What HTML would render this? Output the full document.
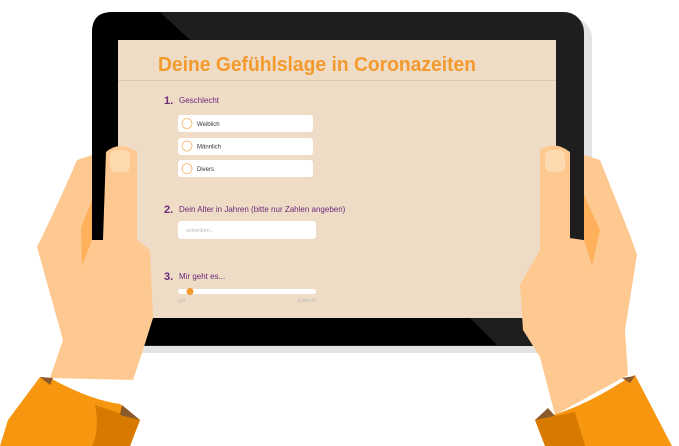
<!DOCTYPE html>
<html><head><meta charset="utf-8"><style>
html,body{margin:0;padding:0;background:#fff;width:679px;height:446px;overflow:hidden}
svg{display:block}
text{font-family:"Liberation Sans",sans-serif}
</style></head><body>
<svg width="679" height="446" viewBox="0 0 679 446" xmlns="http://www.w3.org/2000/svg">
<rect x="98" y="18" width="494" height="335" rx="20" fill="#e3e3e3"/>
<rect x="92" y="12" width="492" height="334" rx="20" fill="#1e1e1e"/>
<path d="M112 12 L160 12 L190 40 L118 40 L118 318 L92 318 L92 32 Q92 12 112 12 Z" fill="#000"/>
<path d="M118 318 L470 318 L497 345 L112 345 Q92 345 92 325 L92 318 Z" fill="#000"/>
<rect x="118" y="40" width="438" height="278" fill="#efdcc6"/>
<line x1="118" y1="80.5" x2="556" y2="80.5" stroke="#dfc6aa" stroke-width="1"/>
<text x="158" y="71" font-size="20" font-weight="bold" fill="#f39a2e" textLength="318" lengthAdjust="spacingAndGlyphs">Deine Gefühlslage in Coronazeiten</text>

<text x="164" y="104" font-size="11" font-weight="bold" fill="#6b2a7a">1.</text>
<text x="179" y="103" font-size="8" fill="#6b2a7a">Geschlecht</text>
<g font-size="6" fill="#333">
<rect x="178" y="115" width="135" height="17" rx="3" fill="#fff"/>
<circle cx="187" cy="123.5" r="5" fill="none" stroke="#f7b466" stroke-width="0.8"/>
<text x="197" y="126">Weiblich</text>
<rect x="178" y="138" width="135" height="17" rx="3" fill="#fff"/>
<circle cx="187" cy="146" r="5" fill="none" stroke="#f7b466" stroke-width="0.8"/>
<text x="197" y="148.5">Männlich</text>
<rect x="178" y="160" width="135" height="17" rx="3" fill="#fff"/>
<circle cx="187" cy="168.5" r="5" fill="none" stroke="#f7b466" stroke-width="0.8"/>
<text x="197" y="171">Divers</text>
</g>

<text x="164" y="213" font-size="11" font-weight="bold" fill="#6b2a7a">2.</text>
<text x="179" y="212" font-size="8" fill="#6b2a7a">Dein Alter in Jahren (bitte nur Zahlen angeben)</text>
<rect x="178" y="221" width="138" height="18" rx="3" fill="#fff"/>
<text x="186" y="232" font-size="5.5" fill="#bbb">schreiben...</text>

<text x="164" y="280" font-size="11" font-weight="bold" fill="#6b2a7a">3.</text>
<text x="179" y="279" font-size="8" fill="#6b2a7a">Mir geht es...</text>
<rect x="178" y="289" width="138" height="5" rx="2.5" fill="#fff"/>
<circle cx="190" cy="291.5" r="3.5" fill="#f39a2e"/>
<text x="178" y="302" font-size="5" fill="#bbb">gut</text>
<text x="316" y="302" font-size="5" fill="#bbb" text-anchor="end">schlecht</text>

<!-- left hand -->
<path d="M77 160 Q60 200 37 247 L63 340 L50 378 L133 380 L143 350 L153 318 L150 250 L137 240 L137 152 Q120 140 106 152 L103 240 L92 238 L92 155 Z" fill="#fec990"/>
<path d="M92 200 L81 228 L82 266 L92 240 Z" fill="#feb05b"/>
<path d="M92 150 L103 150 L103 240 L92 240 Z" fill="#000"/>
<rect x="110" y="150" width="20" height="22" rx="6" fill="#fedab0"/>
<path d="M0 446 L8 420 L40 377 L50 378 Q90 400 120 404 L140 420 L130 446 Z" fill="#f7960f"/>
<path d="M95 405 L140 420 L130 446 L92 446 Q100 430 95 405 Z" fill="#d97a00"/>
<path d="M40 377 L53 378 L50 385 Z" fill="#8b5a2b"/>
<path d="M122 405 L140 420 L120 415 Z" fill="#8b5a2b"/>

<!-- right hand -->
<path d="M584 155 L600 160 L630 235 L637 255 L625 330 L628 375 L555 415 L540 357 L523 330 L520 285 L540 250 L540 150 Q555 140 570 152 L570 238 L584 240 Z" fill="#fec990"/>
<path d="M584 195 L600 230 L592 266 L584 240 Z" fill="#feb05b"/>
<path d="M570 150 L584 150 L584 240 L570 238 Z" fill="#1e1e1e"/>
<rect x="545" y="150" width="20" height="22" rx="6" fill="#fedab0"/>
<path d="M535 420 Q580 410 628 378 L635 375 L672 446 L545 446 Z" fill="#f7960f"/>
<path d="M535 420 L575 412 L585 446 L545 446 Z" fill="#d97a00"/>
<path d="M622 378 L635 376 L630 383 Z" fill="#8b5a2b"/>
<path d="M535 420 L548 408 L555 416 Z" fill="#8b5a2b"/>
</svg>
</body></html>
